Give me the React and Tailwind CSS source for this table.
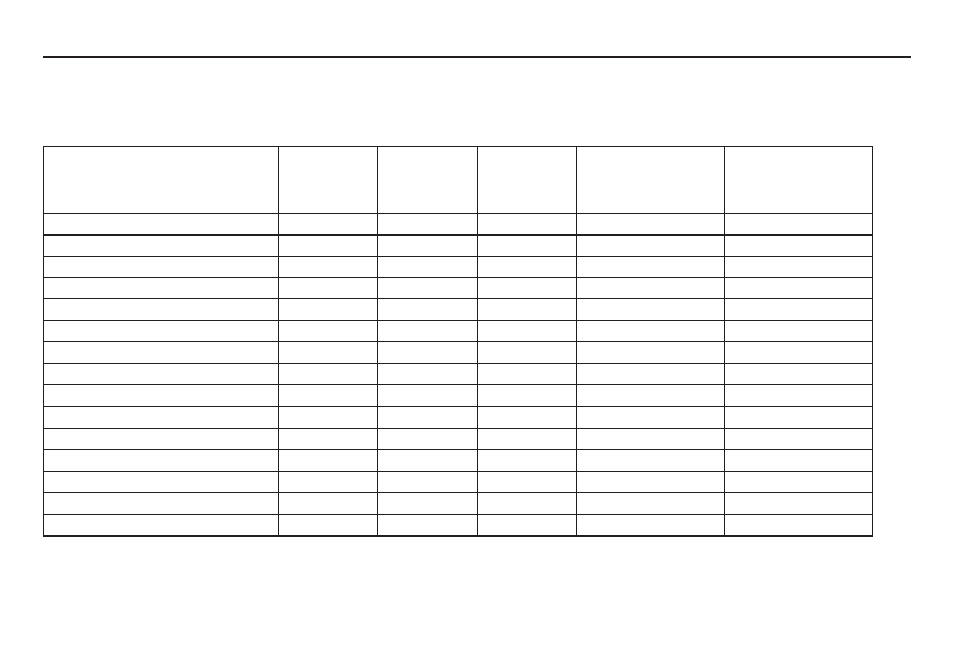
const cols = "grid grid-cols-[234px_99px_100px_99px_148px_148px]";

// body row heights (content only, border added per row)
const bodyRows = [
  "h-[20px]", "h-[20px]", "h-[20px]", "h-[21px]", "h-[20px]", "h-[21px]", "h-[20px]",
  "h-[21px]", "h-[21px]", "h-[20px]", "h-[21px]", "h-[20px]", "h-[21px]", "h-[20px]",
];

function Row({ height, border }) {
  return (
    <div className={`${cols} ${border}`}>
      {[0, 1, 2, 3, 4, 5].map((i) => (
        <div
          key={i}
          className={`${height} ${i === 0 ? "" : "border-l border-[#231f20]"}`}
        />
      ))}
    </div>
  );
}

export default function App() {
  return (
    <div className="w-[954px] h-[651px] bg-white font-['Liberation_Sans',sans-serif]">
      <div className="pt-[56px] pl-[43px]">
        <div className="w-[868px] h-[2px] bg-[#231f20]" />
      </div>

      <div className="pl-[43px] pt-[88px]">
        <div className="w-[830px] border-t border-x border-[#231f20]">
          <Row height="h-[66px]" border="border-b border-[#231f20]" />
          <Row height="h-[20px]" border="border-b-2 border-[#231f20]" />
          {bodyRows.map((h, i) => (
            <Row
              key={i}
              height={h}
              border={
                i === bodyRows.length - 1
                  ? "border-b-2 border-[#231f20]"
                  : "border-b border-[#231f20]"
              }
            />
          ))}
        </div>
      </div>
    </div>
  );
}
